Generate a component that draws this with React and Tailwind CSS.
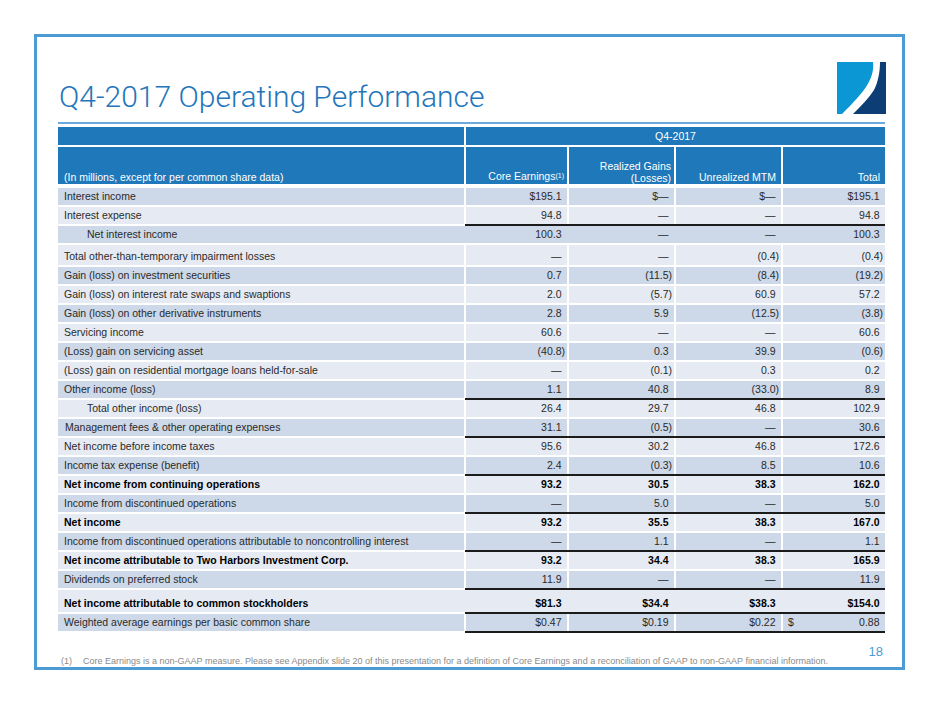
import React from "react";

const DARK = "bg-[#cdd8e8]";
const LIGHT = "bg-[#e6ebf3]";

const rows = [
  { l: "Interest income", v: ["$195.1", "$—", "$—", "$195.1"] },
  { l: "Interest expense", v: ["94.8", "—", "—", "94.8"], line: true },
  { l: "Net interest income", v: ["100.3", "—", "—", "100.3"], indent: true, merged: true },
  { l: "Total other-than-temporary impairment losses", v: ["—", "—", "(0.4)", "(0.4)"], h: 20 },
  { l: "Gain (loss) on investment securities", v: ["0.7", "(11.5)", "(8.4)", "(19.2)"] },
  { l: "Gain (loss) on interest rate swaps and swaptions", v: ["2.0", "(5.7)", "60.9", "57.2"] },
  { l: "Gain (loss) on other derivative instruments", v: ["2.8", "5.9", "(12.5)", "(3.8)"] },
  { l: "Servicing income", v: ["60.6", "—", "—", "60.6"] },
  { l: "(Loss) gain on servicing asset", v: ["(40.8)", "0.3", "39.9", "(0.6)"] },
  { l: "(Loss) gain on residential mortgage loans held-for-sale", v: ["—", "(0.1)", "0.3", "0.2"] },
  { l: "Other income (loss)", v: ["1.1", "40.8", "(33.0)", "8.9"], line: true },
  { l: "Total other income (loss)", v: ["26.4", "29.7", "46.8", "102.9"], indent: true },
  { l: "Management fees & other operating expenses", v: ["31.1", "(0.5)", "—", "30.6"], line: true, nudge: true },
  { l: "Net income before income taxes", v: ["95.6", "30.2", "46.8", "172.6"] },
  { l: "Income tax expense (benefit)", v: ["2.4", "(0.3)", "8.5", "10.6"], line: true },
  { l: "Net income from continuing operations", v: ["93.2", "30.5", "38.3", "162.0"], bold: true },
  { l: "Income from discontinued operations", v: ["—", "5.0", "—", "5.0"], line: true },
  { l: "Net income", v: ["93.2", "35.5", "38.3", "167.0"], bold: true },
  { l: "Income from discontinued operations attributable to noncontrolling interest", v: ["—", "1.1", "—", "1.1"], line: true },
  { l: "Net income attributable to Two Harbors Investment Corp.", v: ["93.2", "34.4", "38.3", "165.9"], bold: true },
  { l: "Dividends on preferred stock", v: ["11.9", "—", "—", "11.9"], line: true },
  { l: "Net income attributable to common stockholders", v: ["$81.3", "$34.4", "$38.3", "$154.0"], bold: true, line: true, h: 22, merged: true },
  { l: "Weighted average earnings per basic common share", v: ["$0.47", "$0.19", "$0.22", "0.88"], line: true, dollar: true },
];

const widths = ["w-[101px]", "w-[105px]", "w-[105px]", "w-[102px]"];

function Num({ v }) {
  const neg = v.endsWith(")");
  return (
    <span>
      {v}
      {!neg && <span className="invisible">)</span>}
    </span>
  );
}

function Row({ r, i }) {
  const bg = i % 2 === 0 ? DARK : LIGHT;
  const h = r.h || 17;
  const hClass = h === 20 ? "h-[20px]" : h === 22 ? "h-[22px]" : "h-[17px]";
  const align = h > 17 ? "items-end" : "items-center";
  const cellBg = r.merged ? "" : bg;
  const weight = r.bold ? "font-bold text-black" : "";
  return (
    <div className="flex flex-col">
      <div className={`flex gap-[2px] ${hClass} ${r.merged ? bg : ""}`}>
        <div
          className={`w-[406px] h-full flex ${align} ${cellBg} ${
            r.indent ? "pl-[29px]" : r.nudge ? "pl-[7px]" : "pl-[6px]"
          } ${weight}`}
        >
          <span className="leading-[17px]">{r.l}</span>
        </div>
        {r.v.map((v, k) => (
          <div
            key={k}
            className={`${widths[k]} h-full flex ${align} ${
              k === 3 && r.dollar ? "justify-between pl-[5px]" : "justify-end"
            } pr-[2px] ${cellBg} ${weight}`}
          >
            {k === 3 && r.dollar && <span className="leading-[17px]">$</span>}
            <span className="leading-[17px]">
              <Num v={v} />
            </span>
          </div>
        ))}
      </div>
      <div className="flex h-[2px]">
        <div className="w-[407px]" />
        <div className={`flex-1 ${r.line ? "bg-[#1b1b1b]" : ""}`} />
      </div>
    </div>
  );
}

function Logo() {
  return (
    <svg width="49" height="52" viewBox="0 0 49 52">
      <path d="M0 0 H36 C37.5 10 33 22 22 34 C15 42 8 49 5 52 H0 Z" fill="#0b96d4" />
      <path d="M43 0 H49 V52 H16 C24 44 32 36 37 28 C41 20 43 10 43 0 Z" fill="#0c3d74" />
    </svg>
  );
}

export default function App() {
  return (
    <div className="w-[940px] h-[705px] bg-white pt-[34px] pl-[34px] font-['Liberation_Sans',Arial,sans-serif] text-[#2a2a2a]">
      <div className="w-[871px] h-[636px] border-[3px] border-[#4d9bd5] pl-[21px] pr-[17px] flex flex-col">
        <div className="h-[85px] flex justify-between items-start">
          <div className="mt-[42px] ml-[1px] text-[30px] leading-[36px] text-[#2376bb] font-['Roboto',sans-serif] font-light tracking-[0px]">
            Q4-2017 Operating Performance
          </div>
          <div className="mt-[25px] -mr-[1px]">
            <Logo />
          </div>
        </div>
        <div className="h-[2px] bg-[#6aaade]" />
        <div className="h-[3px]" />
        <div className="text-[10.5px]">
          {/* header row 1 */}
          <div className="flex gap-[2px] h-[18px] text-white">
            <div className="w-[406px] bg-[#1f78b9]" />
            <div className="flex-1 bg-[#1f78b9] flex items-center justify-center pt-[1px]">Q4-2017</div>
          </div>
          <div className="h-[2px]" />
          {/* header row 2 */}
          <div className="flex gap-[2px] h-[37px] text-white leading-[13px]">
            <div className="w-[406px] bg-[#1f78b9] flex items-end pl-[6px]">
              (In millions, except for per common share data)
            </div>
            <div className="w-[101px] bg-[#1f78b9] flex items-end justify-end pr-[3px]">
              <span>
                Core Earnings<span className="text-[7px] relative -top-[2px]">(1)</span>
              </span>
            </div>
            <div className="w-[105px] bg-[#1f78b9] flex flex-col items-end justify-end pr-[3px] leading-[12px] text-right">
              <span>Realized Gains</span>
              <span>(Losses)</span>
            </div>
            <div className="w-[105px] bg-[#1f78b9] flex items-end justify-end pr-[5px]">Unrealized MTM</div>
            <div className="w-[102px] bg-[#1f78b9] flex items-end justify-end pr-[5px]">Total</div>
          </div>
          <div className="h-[4px]" />
          {rows.map((r, i) => (
            <Row key={i} r={r} i={i} />
          ))}
        </div>
        <div className="mt-[11px] flex items-end justify-between">
          <div className="text-[9px] leading-[10px] text-[#8a8a8a] flex pl-[3px]">
            <span className="w-[22px]">(1)</span>
            <span>
              Core Earnings is a non-GAAP measure. Please see Appendix slide 20 of this presentation for a definition of Core
              Earnings and a reconciliation of GAAP to non-GAAP financial information.
            </span>
          </div>
          <div className="text-[13px] leading-[15px] mb-[7px] text-[#4d9bd5] pr-[2px]">18</div>
        </div>
      </div>
    </div>
  );
}
